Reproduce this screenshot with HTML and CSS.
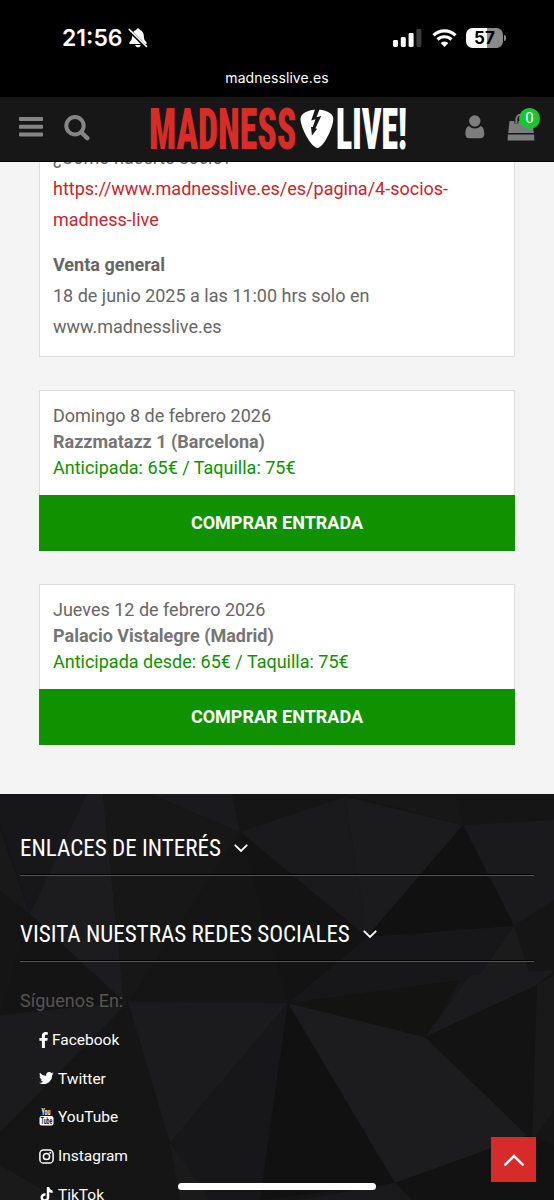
FILE: index.html
```html
<!DOCTYPE html>
<html lang="es">
<head>
	<meta charset="UTF-8">
	<title>Madness Live!</title>
	<link rel="stylesheet" href="styles.css">
</head>
<body>
	<!-- barra de estado -->
	<div class="status">
		<div class="status-row">
			<div class="clock">
				<span>21:56</span>
				<svg width="20" height="20" viewBox="0 0 20 20">
					<path d="M10 .5c-1 0-1.600.6-1.800 1.400C5.600 2.700 4.300 4.800 4.200 7.500c-.1 3.700-.7 4.800-2.400 6.400-.9.900-.5 2.100.6 2.100h15.200c1.100 0 1.500-1.200.6-2.100-1.700-1.600-2.300-2.700-2.400-6.400-.1-2.700-1.400-4.800-4-5.600C11.600 1.100 11 .5 10 .5zM7.200 17h5.600c-.4 1.500-1.400 2.300-2.800 2.300S7.600 18.500 7.200 17z" fill="#fff"/>
					<path d="M1.500 2.500l17 17" stroke="#000" stroke-width="3.200"/>
					<path d="M1.200 1.400l17.300 17" stroke="#fff" stroke-width="1.500" stroke-linecap="round"/>
				</svg>
			</div>
			<div class="signals">
				<svg width="29" height="18" viewBox="0 0 29 18">
					<rect x="0" y="11" width="5" height="7" rx="1.400" fill="#fff"/>
					<rect x="7.800" y="8" width="5" height="10" rx="1.400" fill="#fff"/>
					<rect x="15.600" y="4" width="5" height="14" rx="1.400" fill="#fff"/>
					<rect x="23.400" y="0" width="5" height="18" rx="1.400" fill="#3a3a3a"/>
				</svg>
				<svg width="25" height="18" viewBox="0 0 25 18">
					<path d="M1.500 6.300a16 16 0 0 1 22 0M5.500 10.500a10.200 10.200 0 0 1 14 0" fill="none" stroke="#fff" stroke-width="3.100"/>
					<path d="M8.600 14a5.800 5.800 0 0 1 7.800 0l-3.900 4z" fill="#fff"/>
				</svg>
				<div class="battery"><span>57</span></div>
			</div>
		</div>
		<div class="domain">madnesslive.es</div>
	</div>

	<!-- cabecera -->
	<header class="navbar">
		<svg class="ico-menu" width="24" height="20" viewBox="0 0 24 20" fill="#858585">
			<rect width="24" height="4" rx=".8"/>
			<rect y="7.700" width="24" height="4" rx=".8"/>
			<rect y="15.400" width="24" height="4" rx=".8"/>
		</svg>
		<svg class="ico-search" width="26" height="26" viewBox="0 0 26 26" fill="none" stroke="#858585">
			<circle cx="11" cy="10.700" r="8.700" stroke-width="4"/>
			<path d="M17.500 17.500l5.800 5.600" stroke-width="4.400" stroke-linecap="round"/>
		</svg>
		<svg class="logo" width="256" height="42" viewBox="0 0 256 42">
			<text class="logo-text red" x="-1" y="41" textLength="147.500" lengthAdjust="spacingAndGlyphs">MADNESS</text>
			<path d="M167 1.500c6.500 0 16.300 2.800 16.300 9.300C183.300 20 173 40 167.500 40c-6 0-17-20-17-29.200C150.500 4.300 161 1.500 167 1.500z" fill="#fff"/>
			<path d="M165.500 0l-4.300 12.500 4.300-1.300-2.800 8 -1.700-.4.900 8.700 5.300-6.800-1.800-.3 5.800-12.300-4.700 1.200L170 0z" fill="#171717"/>
			<text class="logo-text white" x="186" y="41" textLength="71" lengthAdjust="spacingAndGlyphs">LIVE!</text>
		</svg>
		<svg class="ico-user" width="20" height="24" viewBox="0 0 20 24" fill="#7d7d7d">
			<path d="M4 11C1.300 11.800.4 15 .4 19c0 2.800 1.500 4.300 3.700 4.300h11.400c2.200 0 3.800-1.500 3.800-4.300 0-4-1-7.200-3.600-8a8 8 0 0 1-11.700 0z"/>
			<circle cx="9.800" cy="6" r="5.700"/>
		</svg>
		<div class="cart">
			<svg width="28" height="27" viewBox="0 0 28 27">
				<path d="M2.500 7h23l1.300 12H1.200z" fill="#7d7d7d"/>
				<path d="M.9 20.500h26.200l.3 6H.6z" fill="#7d7d7d"/>
				<path d="M9.300 9.500V5.500a5 5 0 0 1 10 0V9.500" fill="none" stroke="#171717" stroke-width="4"/>
				<path d="M9.300 9.500V5.500a5 5 0 0 1 10 0V9.500" fill="none" stroke="#7d7d7d" stroke-width="2"/>
			</svg>
			<span class="badge">0</span>
		</div>
	</header>

	<main class="content">
		<div class="card notice">
			<p>¿Cómo hacerte socio?<br>
			<a href="#">https://www.madnesslive.es/es/pagina/4-socios-<br>madness-live</a></p>
			<p><b>Venta general</b><br>
			18 de junio 2025 a las 11:00 hrs solo en<br>
			www.madnesslive.es</p>
		</div>
		<div class="ticket">
			<div class="card info">
				<div>Domingo 8 de febrero 2026</div>
				<div class="venue">Razzmatazz 1 (Barcelona)</div>
				<div class="price">Anticipada: 65€ / Taquilla: 75€</div>
			</div>
			<a class="buy" href="#">COMPRAR ENTRADA</a>
		</div>
		<div class="ticket">
			<div class="card info">
				<div>Jueves 12 de febrero 2026</div>
				<div class="venue">Palacio Vistalegre (Madrid)</div>
				<div class="price">Anticipada desde: 65€ / Taquilla: 75€</div>
			</div>
			<a class="buy" href="#">COMPRAR ENTRADA</a>
		</div>
	</main>

	<footer class="footer">
		<!-- fondo de triangulos -->
		<svg class="poly" width="554" height="406" viewBox="0 794 554 406">
			<path fill="#17171a" d="M0 794H92L30 914 0 820z"/>
			<path fill="#1c1c1e" d="M87 794H103L124 1002 30 914z"/>
			<path fill="#171717" d="M103 794H150L240 832 128 1002H124z"/>
			<path fill="#1a1a1c" d="M150 794H232L240 832z"/>
			<path fill="#1a1a1c" d="M240 832L345 797 367 937z"/>
			<path fill="#1b1b1d" d="M345 797L463 825 367 937z"/>
			<path fill="#171718" d="M345 794H455L463 825z"/>
			<path fill="#1a1a1c" d="M463 825L554 820V900L514 926z"/>
			<path fill="#111" d="M463 825L514 926 367 937z"/>
			<path fill="#171719" d="M367 937L514 926 460 1002 288 1003z"/>
			<path fill="#131313" d="M240 832L367 937 288 1003z"/>
			<path fill="#1b1b1c" d="M514 926L535 990 460 1002z"/>
			<path fill="#19191a" d="M0 830L30 914 0 890z"/>
			<path fill="#141414" d="M30 914L124 1002 0 1015z"/>
			<path fill="#1b1b1d" d="M0 1015L128 1002 0 1133z"/>
			<path fill="#151516" d="M128 1002L170 1143 0 1133z"/>
			<path fill="#1b1b1d" d="M128 1002L288 1003 170 1143z"/>
			<path fill="#17171a" d="M288 1003L260 1200H190L170 1143z"/>
			<path fill="#111" d="M288 1003L395 1183 260 1200z"/>
			<path fill="#1c1c1e" d="M288 1003L425 1037 528 1135 395 1183z"/>
			<path fill="#131312" d="M288 1003L460 980 425 1037z"/>
			<path fill="#1b1b1d" d="M425 1037L470 975 554 970 537 985z"/>
			<path fill="#131313" d="M425 1037L537 985 532 1140z"/>
			<path fill="#19191a" d="M537 985L554 975V1110L532 1140z"/>
			<path fill="#121212" d="M395 1183L528 1135 554 1145V1200H405z"/>
			<path fill="#1a1a1b" d="M0 1165L60 1200H0z"/>
			<path fill="#1a1a1b" d="M170 1143L210 1200H180z"/>
			<path fill="#1a1a1c" d="M395 1183L412 1200H300z"/>
		</svg>
		<div class="footer-body">
			<h3><span>ENLACES DE INTERÉS</span>
				<svg width="14" height="9" viewBox="0 0 14 9"><path d="M1.300 1.300L7 7l5.700-5.700"/></svg>
			</h3>
			<h3><span>VISITA NUESTRAS REDES SOCIALES</span>
				<svg width="14" height="9" viewBox="0 0 14 9"><path d="M1.300 1.300L7 7l5.700-5.700"/></svg>
			</h3>
			<p class="follow">Síguenos En:</p>
			<ul class="social">
				<li>
					<svg width="9" height="16" viewBox="0 0 9 16"><path d="M8.800.2v2.600H7.300c-1.200 0-1.400.6-1.400 1.400v1.700h2.800l-.4 2.800H5.900V16H2.900V8.700H.4V5.900h2.500V3.800C2.900 1.400 4.400.1 6.600.1z"/></svg>
					<span>Facebook</span>
				</li>
				<li>
					<svg width="15" height="13" viewBox="0 0 15 13"><path d="M14.600 1.600c-.4.600-.9 1.100-1.500 1.500v.4c0 4-3 8.600-8.600 8.600-1.700 0-3.200-.5-4.500-1.300 1.600.2 3.200-.3 4.400-1.300-1.400 0-2.400-.9-2.800-2.100.5.100.9.100 1.400-.1C1.600 7 .600 5.800.600 4.300c.4.200.9.400 1.400.4C.600 3.700.200 2 1 .7c1.500 1.800 3.700 3 6.200 3.100C6.700 1.700 8.300 0 10.200 0c.9 0 1.600.4 2.200 1 .7-.1 1.300-.4 1.900-.7-.2.700-.7 1.300-1.300 1.600.6 0 1.100-.1 1.600-.3z"/></svg>
					<span>Twitter</span>
				</li>
				<li>
					<svg width="15" height="18" viewBox="0 0 15 18">
						<text class="yt" x="2.500" y="7" textLength="9" lengthAdjust="spacingAndGlyphs">You</text>
						<rect x=".5" y="8" width="14" height="9.500" rx="2"/>
						<text class="yt dark" x="1.700" y="15.800" textLength="11.500" lengthAdjust="spacingAndGlyphs">Tube</text>
					</svg>
					<span>YouTube</span>
				</li>
				<li>
					<svg width="15" height="15" viewBox="0 0 15 15">
						<rect class="line" x=".9" y=".9" width="13.200" height="13.200" rx="3.600"/>
						<circle class="line" cx="7.500" cy="7.500" r="3.100"/>
						<circle cx="11.300" cy="3.700" r="1"/>
					</svg>
					<span>Instagram</span>
				</li>
				<li>
					<svg width="15" height="15" viewBox="0 0 15 15"><path d="M7.800 0h2.500c.2 2 1.400 3.200 3.300 3.400v2.500c-1.200 0-2.300-.3-3.300-1v5c0 3-2.100 4.900-4.500 4.900-2.500 0-4.300-1.900-4.300-4.300 0-2.700 2.200-4.600 5-4.300v2.600c-1.400-.4-2.500.4-2.500 1.700 0 1 .8 1.800 1.800 1.800 1.200 0 2-.8 2-2.200z"/></svg>
					<span>TikTok</span>
				</li>
			</ul>
		</div>
	</footer>

	<a class="to-top" href="#">
		<svg width="20" height="12" viewBox="0 0 20 12"><path d="M1.300 10.700L10 2l8.700 8.700"/></svg>
	</a>
	<div class="home-bar"></div>
</body>
</html>
```
FILE: styles.css
```css
* {
	box-sizing: border-box;
}
body {
	margin: 0;
	height: 1200px;
	overflow: hidden;
	background: #f4f4f4;
	font-family: Roboto, "Liberation Sans", sans-serif;
	font-size: 18px;
	color: #666;
}
a {
	text-decoration: none;
}
svg {
	display: block;
	flex: none;
}
p {
	margin: 0;
}

/* barra de estado */
.status {
	height: 97px;
	background: #000;
	color: #fff;
	font-family: Inter, sans-serif;
}
.status-row {
	display: flex;
	justify-content: space-between;
	align-items: center;
	height: 67px;
	padding: 8px 51px 0 62px;
}
.clock {
	display: flex;
	align-items: center;
	gap: 5px;
	font-size: 23px;
	font-weight: 600;
}
.signals {
	display: flex;
	align-items: center;
	gap: 9.500px;
}
.battery {
	position: relative;
	width: 37px;
	height: 20px;
	border-radius: 6.500px;
	background: linear-gradient(90deg, #fff 57%, #8a8a8a 57%);
	color: #000;
	font-size: 17px;
	font-weight: 700;
	line-height: 20px;
	text-align: center;
}
.battery::after {
	content: "";
	position: absolute;
	left: 38px;
	top: 7px;
	width: 2px;
	height: 6px;
	border-radius: 0 2px 2px 0;
	background: #8a8a8a;
}
.domain {
	font-size: 14px;
	line-height: 22px;
	letter-spacing: .1px;
	text-align: center;
}

/* cabecera */
.navbar {
	display: flex;
	align-items: center;
	height: 65px;
	padding: 0 19px;
	background: #171717;
	border-bottom: 1px solid #050505;
}
.ico-menu {
	margin-top: -4px;
}
.ico-search {
	margin-left: 21px;
	margin-top: -2px;
}
.logo {
	margin-left: 60px;
	margin-top: -1px;
	overflow: visible;
}
.logo-text {
	font-family: "Roboto Condensed", Roboto, sans-serif;
	font-size: 56.500px;
	font-stretch: 75%;
	font-weight: 900;
}
.red {
	fill: #d92b27;
}
.white {
	fill: #fff;
}
.ico-user {
	margin-left: auto;
	margin-right: 22px;
	margin-top: -4px;
}
.cart {
	position: relative;
	margin-top: -4px;
}
.badge {
	position: absolute;
	left: 12px;
	top: -6px;
	width: 21px;
	height: 21px;
	border-radius: 50%;
	background: #19c632;
	color: #fff;
	font-size: 15px;
	line-height: 21px;
	text-align: center;
}

/* contenido */
.content {
	height: 632px;
	padding: 0 39px;
	overflow: hidden;
}
.card {
	background: #fff;
	border: 1px solid #ddd;
	padding: 12px 13px;
}
.notice {
	margin-top: -35px;
	height: 230px;
	padding-top: 14px;
	line-height: 31px;
}
.notice p {
	margin-bottom: 14px;
}
.notice a {
	color: #c9252b;
}
.ticket {
	margin-top: 33px;
}
.info {
	height: 105px;
	padding-top: 12px;
	border-bottom: 0;
	line-height: 25.800px;
}
.venue {
	font-weight: 700;
	color: #757575;
}
.price {
	color: #0f9100;
}
.buy {
	display: block;
	height: 56px;
	background: #0f9100;
	color: #fff;
	font-weight: 700;
	line-height: 55px;
	text-align: center;
}

/* pie */
.footer {
	position: relative;
	height: 406px;
	overflow: hidden;
	background: #151515;
}
.poly {
	position: absolute;
	left: 0;
	top: 0;
}
.footer-body {
	position: relative;
	padding: 26px 20px 0;
}
h3 {
	display: flex;
	align-items: center;
	gap: 13px;
	height: 56px;
	margin: 0 0 30px;
	padding-top: 1px;
	border-bottom: 1px solid #555;
	box-shadow: inset 0 -1px 0 #000;
	color: #fff;
	font-family: "Roboto Condensed", Roboto, sans-serif;
	font-size: 23.100px;
	font-stretch: 75%;
	font-weight: 400;
	white-space: nowrap;
}
h3 path,
.to-top path {
	fill: none;
	stroke: #fff;
	stroke-width: 1.800;
	stroke-linecap: round;
}
.follow {
	margin-top: -3px;
	color: #555;
	line-height: 24px;
}
.social {
	margin: 8px 0 0;
	padding: 0 0 0 19px;
	list-style: none;
	color: #fff;
	font-size: 15.500px;
}
.social li {
	display: flex;
	align-items: center;
	gap: 4px;
	height: 38.600px;
}
.social svg {
	fill: #fff;
}
.social .line {
	fill: none;
	stroke: #fff;
	stroke-width: 1.500;
}
.yt {
	font-size: 8.500px;
	font-weight: 700;
}
.social .dark {
	fill: #151515;
}

/* botones flotantes */
.to-top {
	position: fixed;
	left: 491px;
	top: 1137px;
	display: flex;
	align-items: center;
	justify-content: center;
	width: 45px;
	height: 45px;
	background: #d62b28;
}
.to-top path {
	stroke-width: 2.500;
}
.home-bar {
	position: fixed;
	left: 178px;
	top: 1183px;
	width: 198px;
	height: 7px;
	border-radius: 4px;
	background: #fff;
}
```
